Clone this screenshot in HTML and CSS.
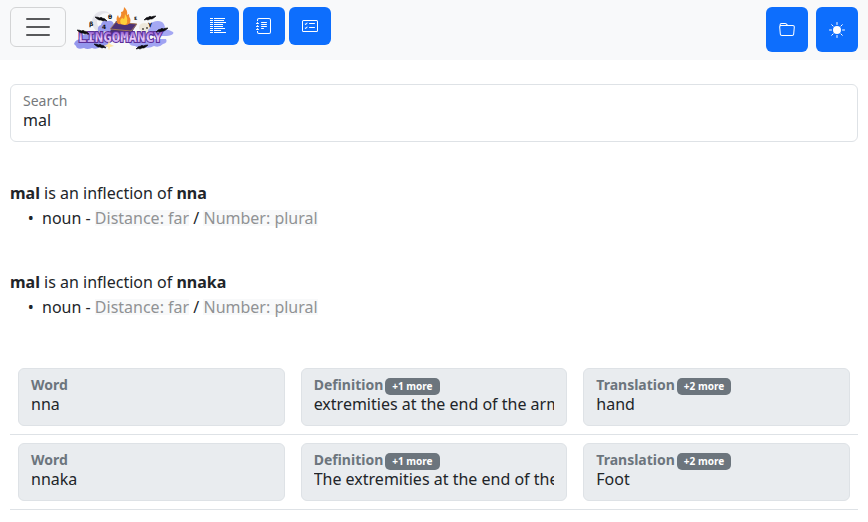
FILE: index.html
```html
<!DOCTYPE html>
<html lang="en">
<head>
    <meta charset="UTF-8">
    <meta name="viewport" content="width=device-width, initial-scale=1.0">
    <title>Lingomancy</title>
    <link rel="stylesheet" href="styles.css">
</head>
<body>
    <nav class="navbar">
        <button type="button" class="toggler" aria-label="Toggle navigation">
            <svg viewBox="0 0 30 30" width="30" height="30" fill="none" stroke="currentColor" stroke-width="2" stroke-linecap="round">
                <path d="M4 7h22M4 15h22M4 23h22"/>
            </svg>
        </button>
        <a href="#" class="brand" aria-label="Lingomancy home">
            <svg viewBox="0 0 100 43" width="100" height="43">
                <defs>
                    <linearGradient id="letters" x1="0" y1="0" x2="0" y2="1">
                        <stop offset="0.2" stop-color="#9a66d6"/>
                        <stop offset="0.6" stop-color="#ecd2fc"/>
                        <stop offset="1" stop-color="#9d70dc"/>
                    </linearGradient>
                    <path id="bat" d="M-6-2 Q-3-2 -1-1 L0-2 L1-1 Q4-1 6 2 Q3 1 2 2 L0 1 L-2 1 Q-4 0 -6-2Z" fill="#0b0b0f" stroke="#0b0b0f" stroke-width="0.6"/>
                </defs>
                <!-- moon -->
                <circle cx="29" cy="15" r="11" fill="#e4e4ea"/>
                <circle cx="32" cy="15" r="9" fill="#f8f9fa"/>
                <!-- clouds -->
                <path d="M24 24q-1-5 3-6q1-5 7-4q5-1 6 4q3 4 0 7z" fill="#9a9cee"/>
                <path d="M73 24q0-7 6-9q5-2 9 0q3 2 3 7q5 1 8 3q2 3-6 4H73z" fill="#a5a8f3"/>
                <path d="M0 37q1-4 6-5l1-3q4-3 8-1h20v11q-5 3-9 1q-4 3-8 1q-5 2-8 0q-7 2-8-2z" fill="#9497ed"/>
                <path d="M55 32h37q2 4-3 5q-4 4-9 2q-5 3-10 1q-6 2-9-1q-5 0-6-3z" fill="#a0a3f2"/>
                <!-- spell book and flame -->
                <path d="M42 14l21 3l-7 11H34z" fill="#48306f"/>
                <path d="M42 15l21 2l-6 7l-21-2z" fill="#4d3276" stroke="#b98a55" stroke-width="0.8"/>
                <path d="M44 17q-3-5 0-9l1 3q3-2 2-6q3 0 3-5q4 3 3 8l2-1q0 3 1 4q2 5-3 7z" fill="#f08a2c"/>
                <path d="M47 17q-2-4 1-6l2 1q1-2 1-5q3 4 2 7q1 2-2 4z" fill="#ffd13b"/>
                <!-- skull -->
                <path d="M65 21q0-5 6-5q5 1 5 5l-2 2v3h-7v-3q-2 0-2-2z" fill="#eee9dc"/>
                <circle cx="69" cy="22" r="1" fill="#55504a"/>
                <circle cx="73" cy="21" r="1" fill="#55504a"/>
                <g class="runes">
                    <text x="15" y="19">β</text>
                    <text x="34" y="12">θ</text>
                    <text x="28" y="22">4</text>
                    <text x="60" y="13">ε</text>
                    <text x="74" y="19">γ</text>
                </g>
                <text class="wordmark" x="4" y="35">LINGOMANCY</text>
                <use href="#bat" transform="translate(27 12)"/>
                <use href="#bat" transform="translate(9 25)"/>
                <use href="#bat" transform="translate(26 39)"/>
                <use href="#bat" transform="translate(76 11) scale(-1 1)"/>
                <use href="#bat" transform="translate(88 23) scale(-1 1)"/>
                <use href="#bat" transform="translate(68 40) scale(-1 1)"/>
                <path d="M35 33l1 4l4 2l-4 1l-1 4l-1-4l-4-1l4-2z" fill="#ffe7a3"/>
            </svg>
        </a>
        <div class="tools">
            <button type="button" class="btn" aria-label="Texts">
                <svg viewBox="0 0 16 16" width="16" height="16" fill="none" stroke="currentColor">
                    <path d="M0 .5h3M0 2.500h3M0 4.500h3M0 6.500h3M0 8.500h3M0 10.500h3M0 12.500h3M0 14.500h3"/>
                    <path d="M4 .5h11M4 2.500h10M4 4.500h12M4 6.500h9M4 8.500h9M4 10.500h11M4 12.500h7M4 14.500h12"/>
                </svg>
            </button>
            <button type="button" class="btn" aria-label="Dictionary">
                <svg viewBox="0 0 16 16" width="16" height="16" fill="currentColor">
                    <path d="M5 10.500a.5.5 0 0 1 .5-.5h2a.5.5 0 0 1 0 1h-2a.5.5 0 0 1-.5-.5m0-2a.5.5 0 0 1 .5-.5h5a.5.5 0 0 1 0 1h-5a.5.5 0 0 1-.5-.5m0-2a.5.5 0 0 1 .5-.5h5a.5.5 0 0 1 0 1h-5a.5.5 0 0 1-.5-.5m0-2a.5.5 0 0 1 .5-.5h5a.5.5 0 0 1 0 1h-5a.5.5 0 0 1-.5-.5"/>
                    <path d="M3 0h10a2 2 0 0 1 2 2v12a2 2 0 0 1-2 2H3a2 2 0 0 1-2-2v-1h1v1a1 1 0 0 0 1 1h10a1 1 0 0 0 1-1V2a1 1 0 0 0-1-1H3a1 1 0 0 0-1 1v1H1V2a2 2 0 0 1 2-2"/>
                    <path d="M1 5v-.5a.5.5 0 0 1 1 0V5h.5a.5.5 0 0 1 0 1h-2a.5.5 0 0 1 0-1zm0 3v-.5a.5.5 0 0 1 1 0V8h.5a.5.5 0 0 1 0 1h-2a.5.5 0 0 1 0-1zm0 3v-.5a.5.5 0 0 1 1 0v.5h.5a.5.5 0 0 1 0 1h-2a.5.5 0 0 1 0-1z"/>
                </svg>
            </button>
            <button type="button" class="btn" aria-label="Quizzes">
                <svg viewBox="0 0 16 16" width="16" height="16" fill="currentColor">
                    <path d="M14.500 3a.5.5 0 0 1 .5.5v9a.5.5 0 0 1-.5.5h-13a.5.5 0 0 1-.5-.5v-9a.5.5 0 0 1 .5-.5zm-13-1A1.500 1.500 0 0 0 0 3.500v9A1.500 1.500 0 0 0 1.500 14h13a1.500 1.500 0 0 0 1.500-1.500v-9A1.500 1.500 0 0 0 14.500 2z"/>
                    <path d="M7 5.500a.5.5 0 0 1 .5-.5h5a.5.5 0 0 1 0 1h-5a.5.5 0 0 1-.5-.5m-1.496-.854a.5.5 0 0 1 0 .708l-1.500 1.500a.5.5 0 0 1-.708 0l-.5-.5a.5.5 0 1 1 .708-.708l.146.147 1.146-1.147a.5.5 0 0 1 .708 0M7 9.500a.5.5 0 0 1 .5-.5h5a.5.5 0 0 1 0 1h-5a.5.5 0 0 1-.5-.5m-1.496-.854a.5.5 0 0 1 0 .708l-1.500 1.500a.5.5 0 0 1-.708 0l-.5-.5a.5.5 0 0 1 .708-.708l.146.147 1.146-1.147a.5.5 0 0 1 .708 0"/>
                </svg>
            </button>
        </div>
        <div class="settings">
            <button type="button" class="btn" aria-label="Open folder">
                <svg viewBox="0 0 16 16" width="16" height="16" fill="currentColor">
                    <path d="M.54 3.870.5 3a2 2 0 0 1 2-2h3.672a2 2 0 0 1 1.414.586l.828.828A2 2 0 0 0 9.828 3h3.982a2 2 0 0 1 1.992 2.181l-.637 7A2 2 0 0 1 13.174 14H2.826a2 2 0 0 1-1.991-1.819l-.637-7a2 2 0 0 1 .342-1.310zM2.190 4a1 1 0 0 0-.996 1.090l.637 7a1 1 0 0 0 .995.910h10.348a1 1 0 0 0 .995-.910l.637-7A1 1 0 0 0 13.810 4zm4.690-1.707A1 1 0 0 0 6.172 2H2.500a1 1 0 0 0-1 .981l.006.139q.323-.119.684-.120h5.396z"/>
                </svg>
            </button>
            <button type="button" class="btn" aria-label="Light theme">
                <svg viewBox="0 0 16 16" width="16" height="16" fill="currentColor">
                    <circle cx="8" cy="8" r="4"/>
                    <path fill="none" stroke="currentColor" stroke-linecap="round" d="M8 .5v2M8 13.500v2M.5 8h2M13.500 8h2M2.700 2.700l1.400 1.400M11.900 11.900l1.400 1.400M2.700 13.300l1.400-1.400M11.900 4.100l1.400-1.400"/>
                </svg>
            </button>
        </div>
    </nav>

    <main class="container">
        <div class="field">
            <label for="search">Search</label>
            <input type="text" id="search" value="mal">
        </div>

        <section class="inflection">
            <p><b>mal</b> is an inflection of <b>nna</b></p>
            <ul>
                <li>noun - <span class="tag">Distance: far</span> / <span class="tag">Number: plural</span></li>
            </ul>
        </section>
        <section class="inflection">
            <p><b>mal</b> is an inflection of <b>nnaka</b></p>
            <ul>
                <li>noun - <span class="tag">Distance: far</span> / <span class="tag">Number: plural</span></li>
            </ul>
        </section>

        <table class="results">
            <tbody>
                <tr>
                    <td>
                        <div class="field readonly">
                            <label for="word-1">Word</label>
                            <input type="text" id="word-1" value="nna" readonly>
                        </div>
                    </td>
                    <td>
                        <div class="field readonly">
                            <label for="definition-1">Definition <span class="badge">+1 more</span></label>
                            <input type="text" id="definition-1" value="extremities at the end of the arms" readonly>
                        </div>
                    </td>
                    <td>
                        <div class="field readonly">
                            <label for="translation-1">Translation <span class="badge">+2 more</span></label>
                            <input type="text" id="translation-1" value="hand" readonly>
                        </div>
                    </td>
                </tr>
                <tr>
                    <td>
                        <div class="field readonly">
                            <label for="word-2">Word</label>
                            <input type="text" id="word-2" value="nnaka" readonly>
                        </div>
                    </td>
                    <td>
                        <div class="field readonly">
                            <label for="definition-2">Definition <span class="badge">+1 more</span></label>
                            <input type="text" id="definition-2" value="The extremities at the end of the legs" readonly>
                        </div>
                    </td>
                    <td>
                        <div class="field readonly">
                            <label for="translation-2">Translation <span class="badge">+2 more</span></label>
                            <input type="text" id="translation-2" value="Foot" readonly>
                        </div>
                    </td>
                </tr>
            </tbody>
        </table>
    </main>
</body>
</html>
```
FILE: styles.css
```css
* {
    box-sizing: border-box;
}

body {
    margin: 0;
    font-family: "Noto Sans", "Liberation Sans", sans-serif;
    font-size: 16px;
    line-height: 24px;
    color: #212529;
    background-color: #fff;
}

/* Top bar */
.navbar {
    display: flex;
    align-items: flex-start;
    padding: 7px 10px 8px;
    background-color: #f8f9fa;
}

.toggler {
    display: flex;
    align-items: center;
    justify-content: center;
    width: 56px;
    height: 40px;
    padding: 0;
    color: #58595b;
    background-color: transparent;
    border: 1px solid #d3d4d5;
    border-radius: 6px;
    cursor: pointer;
}

.brand {
    display: flex;
    margin: 0 23px 0 8px;
}

.wordmark {
    font: bold 14px "DejaVu Sans Mono", monospace;
    fill: url(#letters);
    stroke: #5a2f96;
    stroke-width: 2px;
    paint-order: stroke;
}

.runes {
    font: bold 6px "DejaVu Sans", sans-serif;
    fill: #111;
}

.tools {
    display: flex;
    gap: 4px;
}

.settings {
    display: flex;
    gap: 8px;
    margin-left: auto;
}

.btn {
    display: flex;
    align-items: center;
    justify-content: center;
    width: 42px;
    height: 38px;
    padding: 0;
    color: #fff;
    background-color: #0d6efd;
    border: none;
    border-radius: 6px;
    cursor: pointer;
}

.settings .btn {
    height: 45px;
}

.container {
    padding: 24px 10px 0;
}

/* Inputs with the label inside the frame */
.field {
    height: 58px;
    padding: 6px 12px;
    background-color: #fff;
    border: 1px solid #dee2e6;
    border-radius: 6px;
}

.field label {
    display: flex;
    gap: 2px;
    height: 18px;
    font-size: 14px;
    line-height: 20px;
    color: #76797c;
}

.field input {
    display: block;
    width: 100%;
    height: 22px;
    padding: 0;
    font: inherit;
    line-height: 22px;
    color: inherit;
    background-color: transparent;
    border: none;
    outline: none;
}

.readonly {
    background-color: #e9ecef;
}

.readonly label {
    font-weight: bold;
    color: #6c757d;
}

.badge {
    height: 17px;
    margin-top: 3px;
    padding: 0 7px;
    font-size: 10px;
    line-height: 17px;
    color: #fff;
    background-color: #6c757d;
    border-radius: 5px;
}

.inflection {
    margin-top: 39px;
}

.inflection + .inflection {
    margin-top: 39px;
}

.inflection p {
    margin: 0;
}

.inflection ul {
    margin: 0;
    padding: 1px 0 0 32px;
    line-height: 25px;
    list-style-type: "•\00a0\00a0";
}

.tag {
    display: inline-block;
    line-height: 16px;
    color: #909294;
    background-color: #f8f9fa;
}

/* Dictionary entries */
.results {
    width: 100%;
    margin-top: 40px;
    border-collapse: collapse;
    table-layout: fixed;
}

.results td {
    padding: 8px;
    border-bottom: 1px solid #dee2e6;
}
```
